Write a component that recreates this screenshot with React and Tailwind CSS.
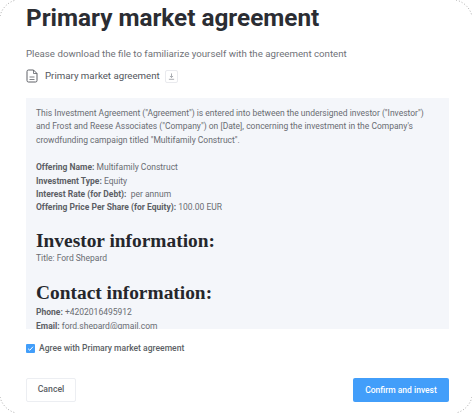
const ROBOTO = 'font-[Roboto,"Liberation_Sans",sans-serif]'

function Corner({ className, d }) {
  return (
    <svg className={`absolute h-[18px] w-[18px] ${className}`} viewBox="0 0 18 18" fill="none">
      <path d={d} stroke="#9a9a9a" strokeWidth="0.8" strokeDasharray="1 2" />
    </svg>
  )
}

export default function App() {
  return (
    <div className={`relative h-[413px] w-[472px] overflow-hidden bg-white ${ROBOTO}`}>
      <Corner className="left-0 top-0" d="M0 16C2 8 8 2 16 0" />
      <Corner className="right-0 top-0" d="M2 0C10 2 16 8 18 16" />
      <Corner className="bottom-0 left-0" d="M0 2C2 10 8 16 16 18" />
      <Corner className="bottom-0 right-0" d="M18 2C16 10 10 16 2 18" />

      <div className="flex h-full flex-col pl-[26px] pr-[23px] pt-[3px]">
        <h1 className="text-[24.3px] font-bold leading-[30px] text-[#2b2d33]">Primary market agreement</h1>

        <p className="mt-[14px] text-[9.7px] leading-[14px] text-[#6f7278]">
          Please download the file to familiarize yourself with the agreement content
        </p>

        <div className="mt-[7px] flex h-[16px] items-center">
          <svg className="h-[14px] w-[12px]" viewBox="0 0 12 14" fill="none" stroke="#5e6167" strokeWidth="1">
            <path d="M1 2.5A1.5 1.5 0 0 1 2.5 1H7.5L11 4.5V11.5A1.5 1.5 0 0 1 9.5 13H2.5A1.5 1.5 0 0 1 1 11.5Z" />
            <path d="M7.5 1V4.5H11M3.5 8H8.5M3.5 10.5H8.5" strokeWidth="0.8" />
          </svg>
          <span className="ml-[7px] text-[9.7px] leading-[14px] text-[#53565c]">Primary market agreement</span>
          <span className="ml-[5px] flex h-[13px] w-[13px] items-center justify-center rounded-[2px] border border-[#e9eaee]">
            <svg className="h-[7px] w-[7px]" viewBox="0 0 8 8" fill="none" stroke="#9ea1a7" strokeWidth="1">
              <path d="M4 0.5V5M2.2 3.4L4 5.2L5.8 3.4M1 7.2H7" />
            </svg>
          </span>
        </div>

        <div className="mt-[14px] h-[231px] w-[423px] shrink-0 overflow-hidden bg-[#f4f6fa] pl-[10px] pr-[16px] pt-[9px] text-[8.5px] leading-[13.4px] text-[#696c72]">
          <p>
            This Investment Agreement ("Agreement") is entered into between the undersigned investor ("Investor") and Frost and Reese Associates ("Company") on [Date], concerning the investment in the Company's crowdfunding campaign titled "Multifamily Construct".
          </p>
          <div className="mt-[14px]">
            <p><b className="font-bold text-[#5c5f65]">Offering Name:</b> Multifamily Construct</p>
            <p><b className="font-bold text-[#5c5f65]">Investment Type:</b> Equity</p>
            <p><b className="font-bold text-[#5c5f65]">Interest Rate (for Debt):</b>&nbsp; per annum</p>
            <p><b className="font-bold text-[#5c5f65]">Offering Price Per Share (for Equity):</b> 100.00 EUR</p>
          </div>
          <h2 className="mt-[14px] font-['Liberation_Serif',serif] text-[19.4px] font-bold leading-[23px] text-[#25272c]">Investor information:</h2>
          <p className="mt-[0px]">Title: Ford Shepard</p>
          <h2 className="mt-[16px] font-['Liberation_Serif',serif] text-[19.4px] font-bold leading-[23px] text-[#25272c]">Contact information:</h2>
          <p className="mt-[2px]"><b className="font-bold text-[#5c5f65]">Phone:</b> +4202016495912</p>
          <p><b className="font-bold text-[#5c5f65]">Email:</b> ford.shepard@gmail.com</p>
        </div>

        <label className="mt-[12px] flex h-[14px] items-center">
          <span className="flex h-[9px] w-[9px] items-center justify-center rounded-[1px] bg-[#429efa]">
            <svg className="h-[7px] w-[7px]" viewBox="0 0 8 8" fill="none" stroke="#fff" strokeWidth="1.1">
              <path d="M1.2 4.2L3.2 6L6.8 2" />
            </svg>
          </span>
          <span className="ml-[4px] text-[8.55px] font-medium leading-[14px] text-[#5c5f65]">Agree with Primary market agreement</span>
        </label>

        <div className="mt-[23px] flex items-center justify-between">
          <button className="h-[24px] w-[50px] rounded-[2px] border border-[#eceef2] bg-white text-[8.7px] font-medium text-[#5c5f65]">Cancel</button>
          <button className="h-[24px] w-[96px] rounded-[2px] bg-[#429efa] text-[8.5px] font-medium text-white">Confirm and invest</button>
        </div>
      </div>
    </div>
  )
}
